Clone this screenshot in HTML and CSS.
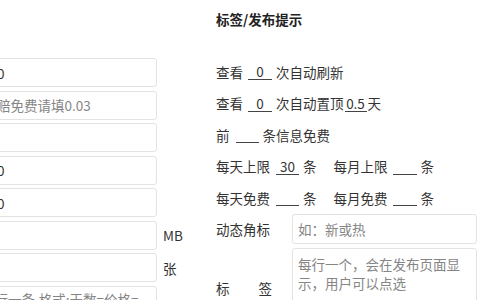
FILE: index.html
```html
<!DOCTYPE html>
<html lang="zh-CN">
<head>
  <meta charset="UTF-8">
  <meta name="viewport" content="width=device-width, initial-scale=1.0">
  <title>栏目设置</title>
  <link rel="stylesheet" href="styles.css">
</head>
<body>
  <div class="page">
    <!-- 左侧：费用/限制 -->
    <div class="left">
      <div class="field"><input type="text" value="0"></div>
      <div class="field"><input type="text" placeholder="赔免费请填0.03"></div>
      <div class="field"><input type="text"></div>
      <div class="field"><input type="text" value="0"></div>
      <div class="field"><input type="text" value="0"></div>
      <div class="field"><input type="text"><span class="unit">MB</span></div>
      <div class="field"><input type="text"><span class="unit">张</span></div>
      <div class="field tall"><textarea class="shift" placeholder="每行一条,格式:天数=价格=积分"></textarea></div>
    </div>
    <!-- 右侧：标签/发布提示 -->
    <div class="right">
      <h3>标签/发布提示</h3>
      <div class="lines">
        <div class="line">查看<span class="blank">0</span>次自动刷新</div>
        <div class="line">查看<span class="blank">0</span>次自动置顶<span class="blank tight">0.5</span>天</div>
        <div class="line">前<span class="blank wide"></span>条信息免费</div>
        <div class="line">每天上限<span class="blank wide">30</span>条<span class="gap"></span>每月上限<span class="blank"></span>条</div>
        <div class="line">每天免费<span class="blank wide"></span>条<span class="gap"></span>每月免费<span class="blank"></span>条</div>
      </div>
      <div class="row">
        <label>动态角标</label>
        <input type="text" placeholder="如：新或热">
      </div>
      <div class="row">
        <label class="spread">标签</label>
        <textarea placeholder="每行一个，会在发布页面显示，用户可以点选"></textarea>
      </div>
    </div>
  </div>
</body>
</html>
```

FILE: styles.css
```css
* {
  box-sizing: border-box;
}
body {
  font-family: "Noto Sans CJK SC", "Noto Sans", sans-serif;
  font-size: 13.5px;
  background-color: #fff;
  color: #333;
  margin: 0;
  padding: 0;
  overflow: hidden;
}
.page {
  display: flex;
  margin-left: -10px;
}
.left {
  width: 226px;
  flex-shrink: 0;
  padding-top: 58px;
}
.field {
  display: flex;
  align-items: center;
  height: 29px;
  margin-bottom: 3.5px;
}
.field.tall {
  height: 60px;
  align-items: flex-start;
}
input,
textarea {
  font-family: inherit;
  font-size: 13.5px;
  color: #333;
  border: 1px solid #e3e3e3;
  border-radius: 3px;
  background: #fff;
  outline: none;
}
input::placeholder,
textarea::placeholder {
  color: #858585;
}
.field input {
  width: 167px;
  height: 29px;
  padding: 0 6px;
}
.field textarea {
  width: 167px;
  height: 60px;
  padding: 4px 6px;
  line-height: 17px;
  resize: none;
}
textarea.shift {
  text-indent: -16px;
}
.unit {
  margin-left: 6px;
}
.right {
  width: 261px;
  flex-shrink: 0;
  padding-top: 10px;
}
h3 {
  margin: 0 0 28px;
  font-size: 13.5px;
  line-height: 18px;
  font-weight: bold;
  color: #222;
}
.line {
  display: flex;
  align-items: center;
  height: 31.5px;
  white-space: nowrap;
}
.blank {
  display: inline-block;
  width: 24px;
  height: 17px;
  margin: 0 4px 0 5px;
  border-bottom: 1px solid #444;
  text-align: center;
  line-height: 16px;
}
.blank.wide {
  width: 23px;
  margin: 0 4px 0 6px;
}
.blank.tight {
  width: 22px;
  margin: 0 1px;
}
.gap {
  display: inline-block;
  width: 17px;
}
.row {
  display: flex;
  align-items: center;
  margin-bottom: 4px;
}
.row label {
  width: 76px;
  flex-shrink: 0;
}
.row label.spread {
  display: inline-block;
  width: 56px;
  margin-right: 20px;
  text-align: justify;
  text-align-last: justify;
}
.row input {
  width: 185px;
  height: 30px;
  padding: 0 5px;
}
.row textarea {
  width: 185px;
  height: 80px;
  padding: 6px 5px;
  line-height: 19px;
  resize: none;
}
```
